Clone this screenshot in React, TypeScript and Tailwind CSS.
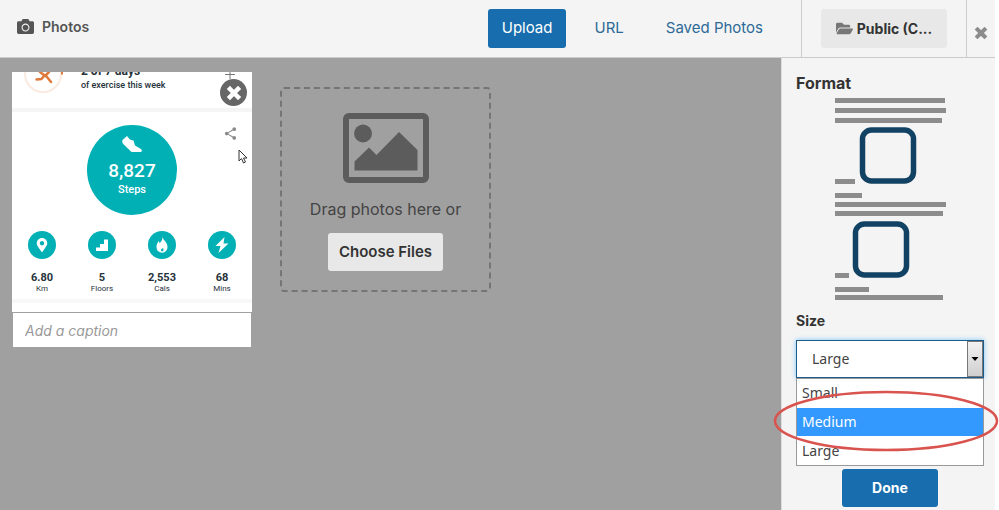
import { useState } from "react";
import { FaCamera, FaFolderOpen, FaMapMarkerAlt } from "react-icons/fa";
import { MdShare } from "react-icons/md";

const STATS = [
  { value: "6.80", label: "Km", icon: "pin" },
  { value: "5", label: "Floors", icon: "stairs" },
  { value: "2,553", label: "Cals", icon: "flame" },
  { value: "68", label: "Mins", icon: "bolt" },
];

const SIZES = ["Small", "Medium", "Large"];

function Cross({ className }: { className: string }) {
  return (
    <svg viewBox="0 0 14 14" className={className} aria-hidden="true">
      <path d="M3.500 3.500l7 7M10.500 3.500l-7 7" stroke="currentColor" strokeWidth="4" strokeLinecap="square" />
    </svg>
  );
}

function StatIcon({ name }: { name: string }) {
  if (name === "pin") return <FaMapMarkerAlt size={14} />;
  if (name === "bolt") {
    return (
      <svg viewBox="0 0 16 18" width="16" height="18" fill="currentColor">
        <path d="M10.500 1L1.500 10h5l-2 7L14.500 7.500h-5z" />
      </svg>
    );
  }
  if (name === "stairs") {
    return (
      <svg viewBox="0 0 14 14" width="14" height="14" fill="currentColor">
        <path d="M1 13V9.500h4V6h4V1.500h4V13z" />
      </svg>
    );
  }
  return (
    <svg viewBox="0 0 14 16" width="14" height="16" fill="currentColor">
      <path
        fillRule="evenodd"
        d="M7.500 0C8 3 12.500 5 12.500 10a5.500 5.500 0 0 1-11 .5C1.300 7 3 5.500 3.500 4c.6.6 1 1.400 1.200 2.200C6.500 4.500 7.500 2.500 7.500 0zM8 11C7 12 6 12 6 13.200c0 .6.500 1.200 1.200 1.200 1.300 0 1.800-1.600.8-3.400z"
      />
    </svg>
  );
}

function FitnessPhoto() {
  return (
    <div className="h-60 overflow-hidden bg-white font-['Roboto',sans-serif] text-[#26323a]">
      {/* bottom part of the weekly exercise row, the rest is cropped */}
      <div className="flex h-9 items-end gap-[17px] overflow-hidden pl-3">
        <svg viewBox="0 0 40 24" className="mb-3 h-6 w-10 shrink-0" fill="none">
          <circle cx="19" cy="2" r="18" stroke="#fbeadf" strokeWidth="2" />
          <path d="M12.500 7.500l5-.5 2-2.500M16 0l4 3 3 2 4 5M22 3l3-3" stroke="#e07a3a" strokeWidth="2.500" strokeLinecap="round" strokeLinejoin="round" />
          <path d="M38 0v2.500" stroke="#e07a3a" strokeWidth="2" />
        </svg>
        <div className="pb-[15px]">
          <p className="text-xs leading-3 font-bold">2 of 7 days</p>
          <p className="text-[9px] leading-4 font-medium">of exercise this week</p>
        </div>
      </div>
      <div className="h-1 bg-[#f5f5f5]" />

      <div className="relative flex flex-col items-center pt-[13px]">
        <div className="flex size-[90px] flex-col items-center rounded-full bg-[#00b0b5] pt-[10px] text-white">
          <svg viewBox="0 0 22 18" width="22" height="18" fill="currentColor">
            <path d="M6 1L1.500 5c-.6 1.500-.2 3 1 4.200L10.500 17H20c1-.6 1-2.300 0-3l-6-3.500-1.500-5L10 5 8.500 4z" />
          </svg>
          <span className="mt-[6px] text-[19px] leading-6 font-medium">8,827</span>
          <span className="text-[11px] leading-[14px] font-medium">Steps</span>
        </div>
        <MdShare size={15} className="absolute top-[14px] right-[14px] text-[#8a8a8a]" />
        <svg viewBox="0 0 10 15" className="absolute top-[37px] right-1 h-[15px] w-[10px]">
          <path d="M1 1v11l2.500-2.500L5.500 14l2-1-2-4H9z" fill="#fff" stroke="#333" strokeWidth="1" />
        </svg>
      </div>

      <ul className="mt-4 grid grid-cols-4">
        {STATS.map((stat) => (
          <li key={stat.label} className="flex flex-col items-center">
            <span className="flex size-7 items-center justify-center rounded-full bg-[#00b0b5] text-white">
              <StatIcon name={stat.icon} />
            </span>
            <strong className="mt-[13px] text-[11px] leading-3 font-bold">{stat.value}</strong>
            <span className="text-[8px] leading-[10px]">{stat.label}</span>
          </li>
        ))}
      </ul>
      <div className="mt-[5px] h-1 bg-[#f8f8f8]" />
    </div>
  );
}

function PhotoCard() {
  return (
    <div className="relative w-60">
      <FitnessPhoto />
      <span className="absolute -top-2 right-4 h-4 overflow-hidden text-[#777]">
        <svg viewBox="0 0 12 16" width="12" height="16">
          <path d="M6 8v7M1 10.500h10" stroke="currentColor" strokeWidth="1" />
        </svg>
      </span>
      <button
        aria-label="Remove photo"
        className="absolute top-[7px] right-[5px] flex size-[27px] items-center justify-center rounded-full bg-[#666] text-white"
      >
        <Cross className="size-4" />
      </button>
      <input
        type="text"
        aria-label="Caption"
        placeholder="Add a caption"
        className="mt-px block h-[34px] w-full border-x border-[#a0a0a0] bg-white px-3 text-sm italic placeholder:text-[#999]"
      />
    </div>
  );
}

function DropZone() {
  return (
    <div className="mt-[15px] flex h-[205px] w-[211px] flex-col items-center rounded border-2 border-dashed border-[#757575] pt-6">
      <svg viewBox="0 0 86 70" width="86" height="70" fill="#5c5c5c">
        <rect x="3" y="3" width="80" height="64" rx="3" fill="none" stroke="#5c5c5c" strokeWidth="6" />
        <circle cx="20" cy="20.500" r="9" />
        <path d="M11.500 57.500v-9L26 34.500l7.500 7.500L56 19l18.500 18v20.500z" />
      </svg>
      <p className="mt-[14px] text-base leading-6 text-[#444]">Drag photos here or</p>
      <button className="mt-3 h-[38px] rounded-[3px] bg-[#e8e8e8] px-[11px] text-[15px] font-semibold text-[#333]">
        Choose Files
      </button>
    </div>
  );
}

function FormatOptions() {
  const [format, setFormat] = useState("inline");

  return (
    <fieldset className="flex flex-col">
      <legend className="text-base leading-6 font-bold text-[#333]">Format</legend>
      <label className="mt-[3px] ml-[38px] w-28">
        <input type="radio" name="format" aria-label="Inline, wide" className="sr-only" checked={format === "wide"} onChange={() => setFormat("wide")} />
        <svg viewBox="0 0 112 101" width="112" height="101" fill="#8c8c8c">
          <rect x="1" y="0" width="110" height="5" />
          <rect x="1" y="10" width="111" height="5" />
          <rect x="1" y="20" width="107" height="5" />
          <rect x="1" y="81" width="20" height="5" />
          <rect x="1" y="95" width="27" height="5" />
          <rect x="28.500" y="32" width="51" height="51" rx="9" fill="none" stroke="#124263" strokeWidth="5.500" />
        </svg>
      </label>
      <label className="mt-[3px] ml-[38px] w-28">
        <input type="radio" name="format" aria-label="Inline" className="sr-only" checked={format === "inline"} onChange={() => setFormat("inline")} />
        <svg viewBox="0 0 112 98" width="112" height="98" fill="#8c8c8c">
          <rect x="1" y="0" width="111" height="5" />
          <rect x="1" y="9" width="108" height="5" />
          <rect x="1" y="71" width="14" height="5" />
          <rect x="1" y="85" width="34" height="5" />
          <rect x="1" y="93" width="108" height="5" />
          <rect x="21.500" y="22" width="51" height="51" rx="9" fill="none" stroke="#124263" strokeWidth="5.500" />
        </svg>
      </label>
    </fieldset>
  );
}

function SizeSelect() {
  const [size, setSize] = useState("Large");

  return (
    <div className="mt-[9px]">
      <label htmlFor="size" className="block text-sm leading-6 font-bold text-[#333]">
        Size
      </label>
      <div className="relative mt-[7px] font-['Noto_Sans',sans-serif] text-sm text-[#444]">
        <select
          id="size"
          value={size}
          onChange={(e) => setSize(e.target.value)}
          className="block h-[38px] w-full appearance-none border border-[#1b5c8e] bg-white px-[15px] shadow-[0_0_5px_#7fc4f5]"
        >
          {SIZES.map((s) => (
            <option key={s}>{s}</option>
          ))}
        </select>
        <span className="pointer-events-none absolute top-px right-px flex h-9 w-4 items-center justify-center border border-[#777] bg-linear-to-b from-[#f2f2f2] to-[#cfcfcf]">
          <svg viewBox="0 0 8 4" width="8" height="4">
            <path d="M0.500 0h7L4 4z" />
          </svg>
        </span>
        <ul role="listbox" aria-label="Size options" className="absolute inset-x-0 top-[38px] flex flex-col gap-px border border-[#999] bg-white">
          {SIZES.map((s) => (
            <li
              key={s}
              role="option"
              aria-selected={s === "Medium"}
              onClick={() => setSize(s)}
              className="px-[5px] py-1 leading-5 aria-selected:bg-[#3399ff] aria-selected:text-white"
            >
              {s}
            </li>
          ))}
        </ul>
        {/* highlight ring around the medium option */}
        <svg viewBox="0 0 226 62" className="pointer-events-none absolute top-[50px] -left-[23px] h-[62px] w-[226px]" fill="none">
          <ellipse cx="113" cy="31" rx="111" ry="29" stroke="#d9534f" strokeWidth="2.500" />
        </svg>
      </div>
    </div>
  );
}

export default function App() {
  return (
    <div className="flex min-h-screen flex-col overflow-hidden bg-white pr-1 font-['Inter',sans-serif]">
      <header className="flex h-[58px] items-stretch border-b border-[#ccc] bg-[#f4f4f4]">
        <h1 className="flex flex-1 items-center gap-2 pb-1 pl-[17px] text-sm font-semibold text-[#555]">
          <FaCamera size={17} />
          Photos
        </h1>
        <nav className="flex items-center gap-[14px] pr-6 text-[15px] text-[#2d6a97]">
          <button className="h-[39px] rounded-[3px] bg-[#176dad] px-[14px] text-white">Upload</button>
          <button className="h-[39px] px-[14px]">URL</button>
          <button className="h-[39px] px-[14px]">Saved Photos</button>
        </nav>
        <div className="flex w-[166px] items-center justify-center border-x border-[#ccc]">
          <button className="flex h-[39px] w-[126px] items-center justify-center gap-1 rounded-[3px] bg-[#e8e8e8] text-sm font-bold text-[#333]">
            <FaFolderOpen size={17} className="text-[#777]" />
            Public (C...
          </button>
        </div>
        <button aria-label="Close" className="flex w-7 items-center justify-center pt-2 text-[#8c8c8c]">
          <Cross className="size-[14px]" />
        </button>
      </header>

      <div className="flex flex-1">
        <main className="flex flex-1 items-start gap-7 bg-[#a0a0a0] pt-[14px] pl-3">
          <PhotoCard />
          <DropZone />
        </main>
        <aside className="flex w-[214px] flex-col border-l border-[#ddd] bg-[#f4f4f4] pt-[13px] pr-[11px] pb-[3px] pl-[14px]">
          <FormatOptions />
          <SizeSelect />
          <button className="mt-[91px] h-[38px] w-24 self-center rounded-[3px] bg-[#176dad] text-sm font-bold text-white">
            Done
          </button>
        </aside>
      </div>
    </div>
  );
}
